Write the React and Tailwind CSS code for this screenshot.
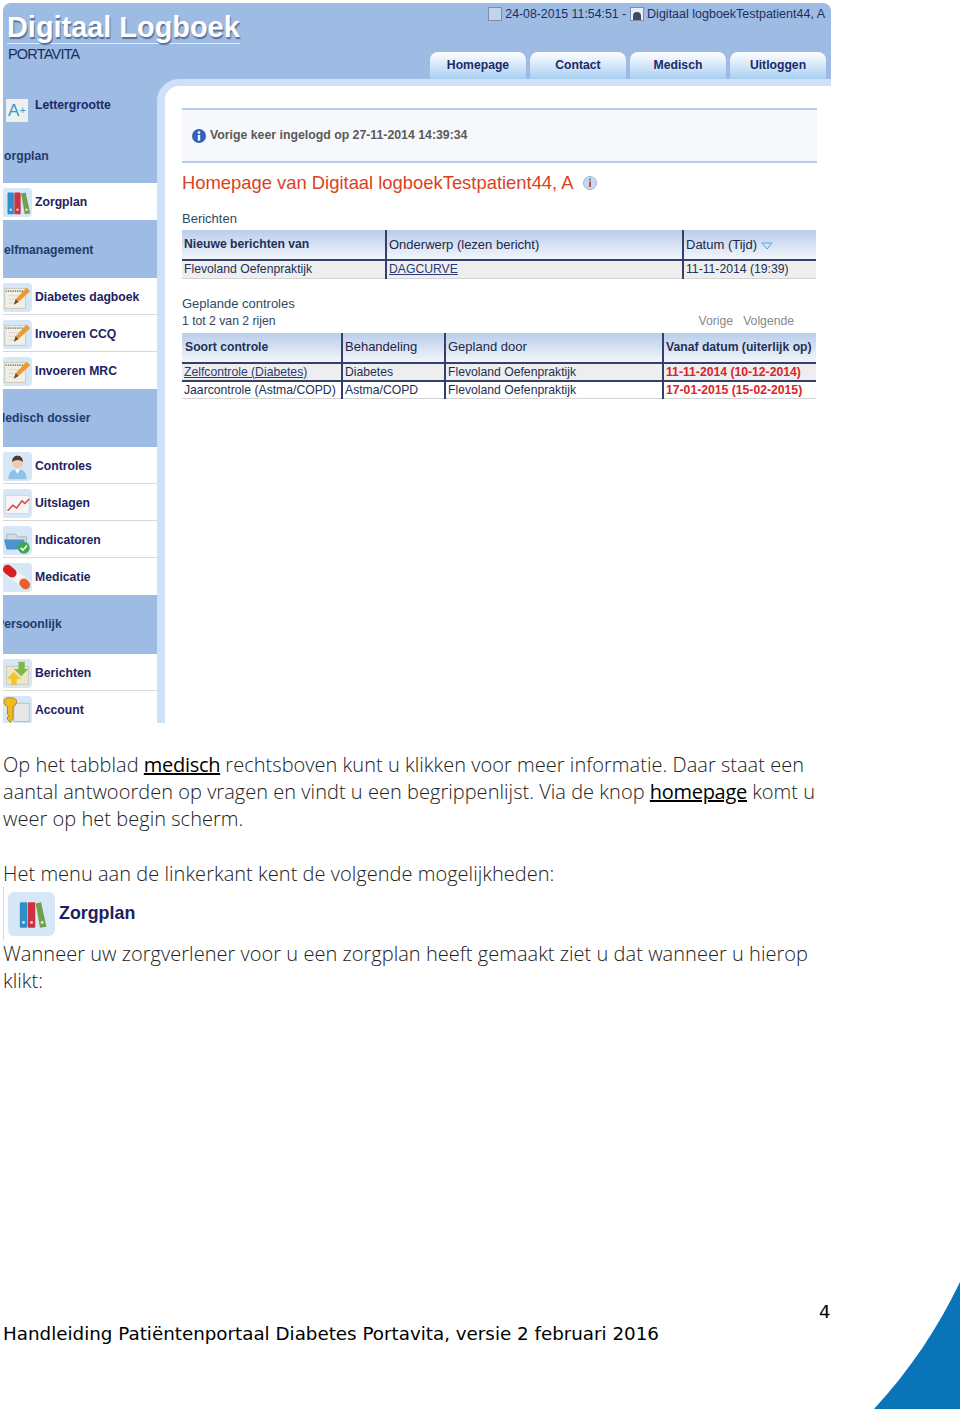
// Small menu drawings, all on a 29x29 tile
const Binders = () => (
  <svg viewBox="0 0 32 32" className="w-full h-full">
    <rect x="5" y="5" width="7" height="24" rx="1" fill="#2b8fca" />
    <rect x="12.5" y="5" width="7" height="24" rx="1" fill="#cc3340" />
    <path d="M20 6l5-1 5 23-6 1z" fill="#6fa04a" />
    <circle cx="8.5" cy="24" r="1.4" fill="#cfe6f5" />
    <circle cx="16" cy="24" r="1.4" fill="#f1c8c8" />
    <circle cx="26" cy="24" r="1.4" fill="#dcebc8" />
  </svg>
);

const Notepad = () => (
  <svg viewBox="0 0 32 32" className="w-full h-full">
    <rect x="2" y="6" width="23" height="22" fill="#f0efe8" stroke="#c9c7b8" />
    <path d="M3 9h21" stroke="#8d8d85" strokeWidth="2" strokeDasharray="1.5 1" />
    <path d="M6 14h14M6 18h10M6 22h8" stroke="#d8d6c8" />
    <path d="M12 24l2-6L26 5l4 4-13 12z" fill="#eb9a34" />
    <path d="M12 24l2-6 3 3z" fill="#6b4a2a" />
  </svg>
);

const Person = () => (
  <svg viewBox="0 0 32 32" className="w-full h-full">
    <path d="M6 30c0-8 4-11 10-11s10 3 10 11z" fill="#8fc3e6" />
    <path d="M13 19l3 5 3-5z" fill="#fff" />
    <circle cx="16" cy="12" r="6" fill="#eecbb0" />
    <path d="M10 11c0-5 3-7 6-7s6 2 6 7c-3-3-9-3-12 0z" fill="#4a3a30" />
  </svg>
);

const ChartLine = () => (
  <svg viewBox="0 0 32 32" className="w-full h-full">
    <rect x="3" y="7" width="26" height="20" fill="#f6f6f6" stroke="#d4d4d4" />
    <path d="M5 24l6-6 4 3 6-8 3 3 5-5" fill="none" stroke="#d6433f" strokeWidth="1.6" />
  </svg>
);

const FolderCheck = () => (
  <svg viewBox="0 0 32 32" className="w-full h-full">
    <path d="M4 9h10l2 3h10v12H4z" fill="#d8dde2" stroke="#a9b2ba" />
    <path d="M1 15h23l-3 11H4z" fill="#4d93cf" />
    <circle cx="23" cy="24" r="6.5" fill="#3daa4e" />
    <path d="M19.5 24l2.5 2.5 4.5-5" fill="none" stroke="#fff" strokeWidth="1.8" />
  </svg>
);

const Pills = () => (
  <svg viewBox="0 0 32 32" className="w-full h-full">
    <path d="M7 9L25 23" stroke="#f4f4f4" strokeWidth="11" strokeLinecap="round" />
    <path d="M5 7L10 11" stroke="#d9201f" strokeWidth="10" strokeLinecap="round" />
    <path d="M23 22L25 24" stroke="#e9622a" strokeWidth="10" strokeLinecap="round" />
  </svg>
);

const Arrows = () => (
  <svg viewBox="0 0 32 32" className="w-full h-full">
    <rect x="4" y="8" width="24" height="20" fill="#ede6c8" stroke="#cfc9ae" />
    <path d="M17 3h7v8h4l-8 8-8-8h5z" fill="#7cb84a" />
    <path d="M12 14l8 8h-5v7H9v-7H4z" fill="#f2c52e" />
  </svg>
);

const KeyIcon = () => (
  <svg viewBox="0 0 32 32" className="w-full h-full">
    <rect x="12" y="8" width="17" height="20" fill="#e7e7e7" stroke="#b9b9b9" />
    <path d="M1 6c0-3 3-4 7-4s7 1 7 4-2 5-4 6v13l-3 4-3-3v-3l2-1-2-2V12C3 11 1 9 1 6z" fill="#efbb1f" stroke="#a87e10" />
  </svg>
);

const MenuRow = ({ icon: Icon, label, last }) => (
  <div className={`bg-white flex items-center h-[37px] pt-[2px] shrink-0 ${last ? '' : 'border-b border-[#d8d8d8]'}`}>
    <div className="w-[29px] h-[29px] bg-[#d6e7f8] rounded-r-[4px] rounded-l-[2px] shrink-0 overflow-hidden">
      <Icon />
    </div>
    <span className="ml-[3px] text-[12.2px] font-bold text-[#1c2260]">{label}</span>
  </div>
);

// Section titles are clipped by the left edge of the menu
const MenuHeading = ({ label, className }) => (
  <div className={`flex items-center shrink-0 overflow-hidden ${className}`}>
    <span className="text-[12.2px] font-bold text-[#1f3a6e] whitespace-nowrap">{label}</span>
  </div>
);

const Sidebar = () => (
  <div className="w-[154px] shrink-0 flex flex-col overflow-hidden">
    <div className="h-[47px] shrink-0 flex items-start pt-[19px]">
      <div className="w-[22px] h-[23px] mt-[1px] ml-[3px] bg-[#eef0f0] flex items-center justify-center text-[#2c9ccf] text-[17px] leading-none">
        A<span className="text-[11px]">+</span>
      </div>
      <span className="ml-[7px] text-[12.2px] leading-[14px] font-bold text-[#1c2a68]">Lettergrootte</span>
    </div>
    <MenuHeading label="orgplan" className="h-[57px] pt-[3px] pl-[1px]" />
    <MenuRow icon={Binders} label="Zorgplan" last />
    <MenuHeading label="elfmanagement" className="h-[58px] pt-[2px] pl-[1px]" />
    <MenuRow icon={Notepad} label="Diabetes dagboek" />
    <MenuRow icon={Notepad} label="Invoeren CCQ" />
    <MenuRow icon={Notepad} label="Invoeren MRC" last />
    <MenuHeading label="Medisch dossier" className="h-[58px] -indent-[8px]" />
    <MenuRow icon={Person} label="Controles" />
    <MenuRow icon={ChartLine} label="Uitslagen" />
    <MenuRow icon={FolderCheck} label="Indicatoren" />
    <MenuRow icon={Pills} label="Medicatie" last />
    <MenuHeading label="Persoonlijk" className="h-[59px] -indent-[7px]" />
    <MenuRow icon={Arrows} label="Berichten" />
    <MenuRow icon={KeyIcon} label="Account" last />
  </div>
);

const Tab = ({ label }) => (
  <div className="w-[96px] h-[27px] rounded-t-[8px] bg-gradient-to-b from-white to-[#a9cff2] flex items-center justify-center text-[12.2px] font-bold text-[#1c2a68]">
    {label}
  </div>
);

const Header = () => (
  <div className="h-[76px] flex justify-between">
    <div className="pl-[4px] pt-[7px]">
      <div className="w-[233px] h-[34px] border-b border-[#dfe9f7] text-[28.9px] leading-[34px] font-bold text-white whitespace-nowrap [text-shadow:1px_2px_1px_#5a6f96]">
        Digitaal Logboek
      </div>
      <div className="mt-[1px] ml-[1px] text-[14.5px] leading-[18px] tracking-[-0.8px] text-[#14305f]">PORTAVITA</div>
    </div>
    <div className="flex flex-col items-end pr-[5px]">
      <div className="h-[49px] pt-[3px] flex items-start gap-[3px] text-[12.3px] leading-[16px] text-[#1e2f5c] whitespace-nowrap pr-[1px]">
        <span className="mt-[1px] w-[14px] h-[14px] bg-[#c3d4ea] border border-[#7d8ea8]" />
        <span>24-08-2015 11:54:51 -</span>
        <span className="mt-[1px] ml-[1px] w-[14px] h-[14px] bg-[#e8eef6] border border-[#7d8ea8] flex items-end justify-center">
          <span className="w-[8px] h-[8px] rounded-t-full bg-[#3d4a63]" />
        </span>
        <span className="text-[12.5px]">Digitaal logboekTestpatient44, A</span>
      </div>
      <div className="flex gap-[4px]">
        <Tab label="Homepage" />
        <Tab label="Contact" />
        <Tab label="Medisch" />
        <Tab label="Uitloggen" />
      </div>
    </div>
  </div>
);

const thClass = 'text-left font-bold whitespace-nowrap px-[2px] bg-gradient-to-b from-[#b9cdea] to-[#f3f6fb] border-l-2 border-b-2 border-[#33406e] first:border-l-0';
const thLight = 'font-normal text-[13px] text-[#1c2747]';
const tdClass = 'text-left whitespace-nowrap px-[2px] leading-[14px] border-l-2 border-[#33406e] first:border-l-0';

const Messages = () => (
  <table className="w-[634px] table-fixed border-collapse text-[12.2px] text-[#243056]">
    <colgroup>
      <col className="w-[204px]" />
      <col className="w-[297px]" />
      <col className="w-[133px]" />
    </colgroup>
    <thead>
      <tr className="h-[30px]">
        <th className={thClass}>Nieuwe berichten van</th>
        <th className={thClass}>
          <span className={thLight}>Onderwerp (lezen bericht)</span>
        </th>
        <th className={thClass}>
          <span className={thLight}>Datum (Tijd)</span>
          <svg viewBox="0 0 12 8" className="inline w-[12px] h-[8px] ml-[4px]">
            <path d="M1 1h10L6 7z" fill="#cfe6fa" stroke="#5aa3dc" />
          </svg>
        </th>
      </tr>
    </thead>
    <tbody>
      <tr className="h-[18px] bg-[#eeeeee] border-b border-[#d4d4d4]">
        <td className={tdClass}>Flevoland Oefenpraktijk</td>
        <td className={tdClass}><span className="underline text-[#2b3a78]">DAGCURVE</span></td>
        <td className={tdClass}>11-11-2014 (19:39)</td>
      </tr>
    </tbody>
  </table>
);

const Planned = () => (
  <table className="w-[634px] table-fixed border-collapse text-[12.2px] text-[#243056]">
    <colgroup>
      <col className="w-[160px]" />
      <col className="w-[103px]" />
      <col className="w-[218px]" />
      <col className="w-[153px]" />
    </colgroup>
    <thead>
      <tr className="h-[30px]">
        <th className={thClass}><span className="ml-[1px]">Soort controle</span></th>
        <th className={thClass}><span className={thLight}>Behandeling</span></th>
        <th className={thClass}><span className={thLight}>Gepland door</span></th>
        <th className={thClass}>Vanaf datum (uiterlijk op)</th>
      </tr>
    </thead>
    <tbody>
      <tr className="h-[18px] bg-[#eeeeee] border-b-2 border-[#33406e]">
        <td className={tdClass}><span className="underline text-[#2b3a78]">Zelfcontrole (Diabetes)</span></td>
        <td className={tdClass}>Diabetes</td>
        <td className={tdClass}>Flevoland Oefenpraktijk</td>
        <td className={`${tdClass} font-bold text-[#d8232a]`}>11-11-2014 (10-12-2014)</td>
      </tr>
      <tr className="h-[18px] border-b border-[#d4d4d4]">
        <td className={tdClass}>Jaarcontrole (Astma/COPD)</td>
        <td className={tdClass}>Astma/COPD</td>
        <td className={tdClass}>Flevoland Oefenpraktijk</td>
        <td className={`${tdClass} font-bold text-[#d8232a]`}>17-01-2015 (15-02-2015)</td>
      </tr>
    </tbody>
  </table>
);

const Main = () => (
  <div className="flex-1 bg-[#cfe1f8] rounded-tl-[22px] pt-[7px] pl-[8px] flex">
    <div className="flex-1 bg-white rounded-tl-[14px] pt-[22px] pl-[17px] pr-[14px]">
      <div className="h-[55px] bg-[#f6f8fc] border-y-2 border-[#b9cbec] flex items-center pl-[10px] text-[12.3px] font-bold text-[#5a5a5a]">
        <svg viewBox="0 0 14 14" className="w-[14px] h-[14px] mr-[4px]">
          <circle cx="7" cy="7" r="7" fill="#3562b8" />
          <circle cx="7" cy="3.6" r="1.3" fill="#fff" />
          <rect x="5.8" y="6" width="2.4" height="5.5" fill="#fff" />
        </svg>
        Vorige keer ingelogd op 27-11-2014 14:39:34
      </div>
      <h1 className="mt-[9px] h-[22px] flex items-center text-[18.4px] font-normal text-[#d9431e]">
        Homepage van Digitaal logboekTestpatient44, A
        <svg viewBox="0 0 14 14" className="w-[14px] h-[14px] ml-[9px]">
          <circle cx="7" cy="7" r="6.5" fill="#c7d8ee" stroke="#9db6d4" />
          <rect x="6" y="5.5" width="2" height="5.5" fill="#b5533f" />
          <circle cx="7" cy="3.6" r="1.1" fill="#5a7fb0" />
        </svg>
      </h1>
      <div className="mt-[17px] h-[19px] text-[13px] leading-[15px] text-[#2f4a66]">Berichten</div>
      <Messages />
      <div className="mt-[17px] h-[18px] text-[13px] leading-[15px] text-[#2f4a66]">Geplande controles</div>
      <div className="h-[19px] flex justify-between text-[12.2px] leading-[15px] text-[#33455f]">
        <span>1 tot 2 van 2 rijen</span>
        <span className="text-[#888888] pr-[23px]">Vorige&nbsp;&nbsp; Volgende</span>
      </div>
      <Planned />
    </div>
  </div>
);

export default function App() {
  return (
    <div className="w-[960px] h-[1409px] relative overflow-hidden bg-white pt-[3px] pl-[3px] font-['Liberation_Sans',Arial,sans-serif]">
      <div className="w-[828px] h-[720px] bg-[#9dbbe3] rounded-t-[8px] flex flex-col overflow-hidden">
        <Header />
        <div className="flex flex-1 min-h-0">
          <Sidebar />
          <Main />
        </div>
      </div>

      <div className="mt-[28px] w-[830px] text-[20px] leading-[27px] font-light tracking-[0.03px] text-[#222222] font-['Open_Sans',sans-serif]">
        <p>
          Op het tabblad <span className="underline font-normal tracking-[-0.3px] text-black">medisch</span> rechtsboven kunt u klikken voor meer informatie. Daar staat een
          aantal antwoorden op vragen en vindt u een begrippenlijst. Via de knop <span className="underline font-normal tracking-[-0.3px] text-black">homepage</span> komt u
          weer op het begin scherm.
        </p>
        <p className="mt-[28px]">Het menu aan de linkerkant kent de volgende mogelijkheden:</p>
        <div className="h-[53px] flex items-center border-l border-[#d8d8d8] pl-[4px] font-['Liberation_Sans',sans-serif]">
          <div className="w-[47px] h-[44px] rounded-[6px] bg-[#d6e7f8] p-[5px]">
            <Binders />
          </div>
          <span className="ml-[4px] text-[17.8px] font-bold text-[#1c2260]">Zorgplan</span>
        </div>
        <p>
          Wanneer uw zorgverlener voor u een zorgplan heeft gemaakt ziet u dat wanneer u hierop
          klikt:
        </p>
      </div>

      {/* page footer */}
      <div className="absolute left-[3px] top-[1321px] text-[18.3px] leading-[26px] text-black font-['DejaVu_Sans',sans-serif]">
        Handleiding Patiëntenportaal Diabetes Portavita, versie 2 februari 2016
      </div>
      <div className="absolute left-[819px] top-[1300px] text-[18px] leading-[24px] text-black font-['DejaVu_Sans',sans-serif]">4</div>
      <svg viewBox="0 0 86 127" className="absolute right-0 bottom-0 w-[86px] h-[127px]">
        <path d="M86 0C64 46 36 88 0 127H86z" fill="#0a74b9" />
      </svg>
    </div>
  );
}
